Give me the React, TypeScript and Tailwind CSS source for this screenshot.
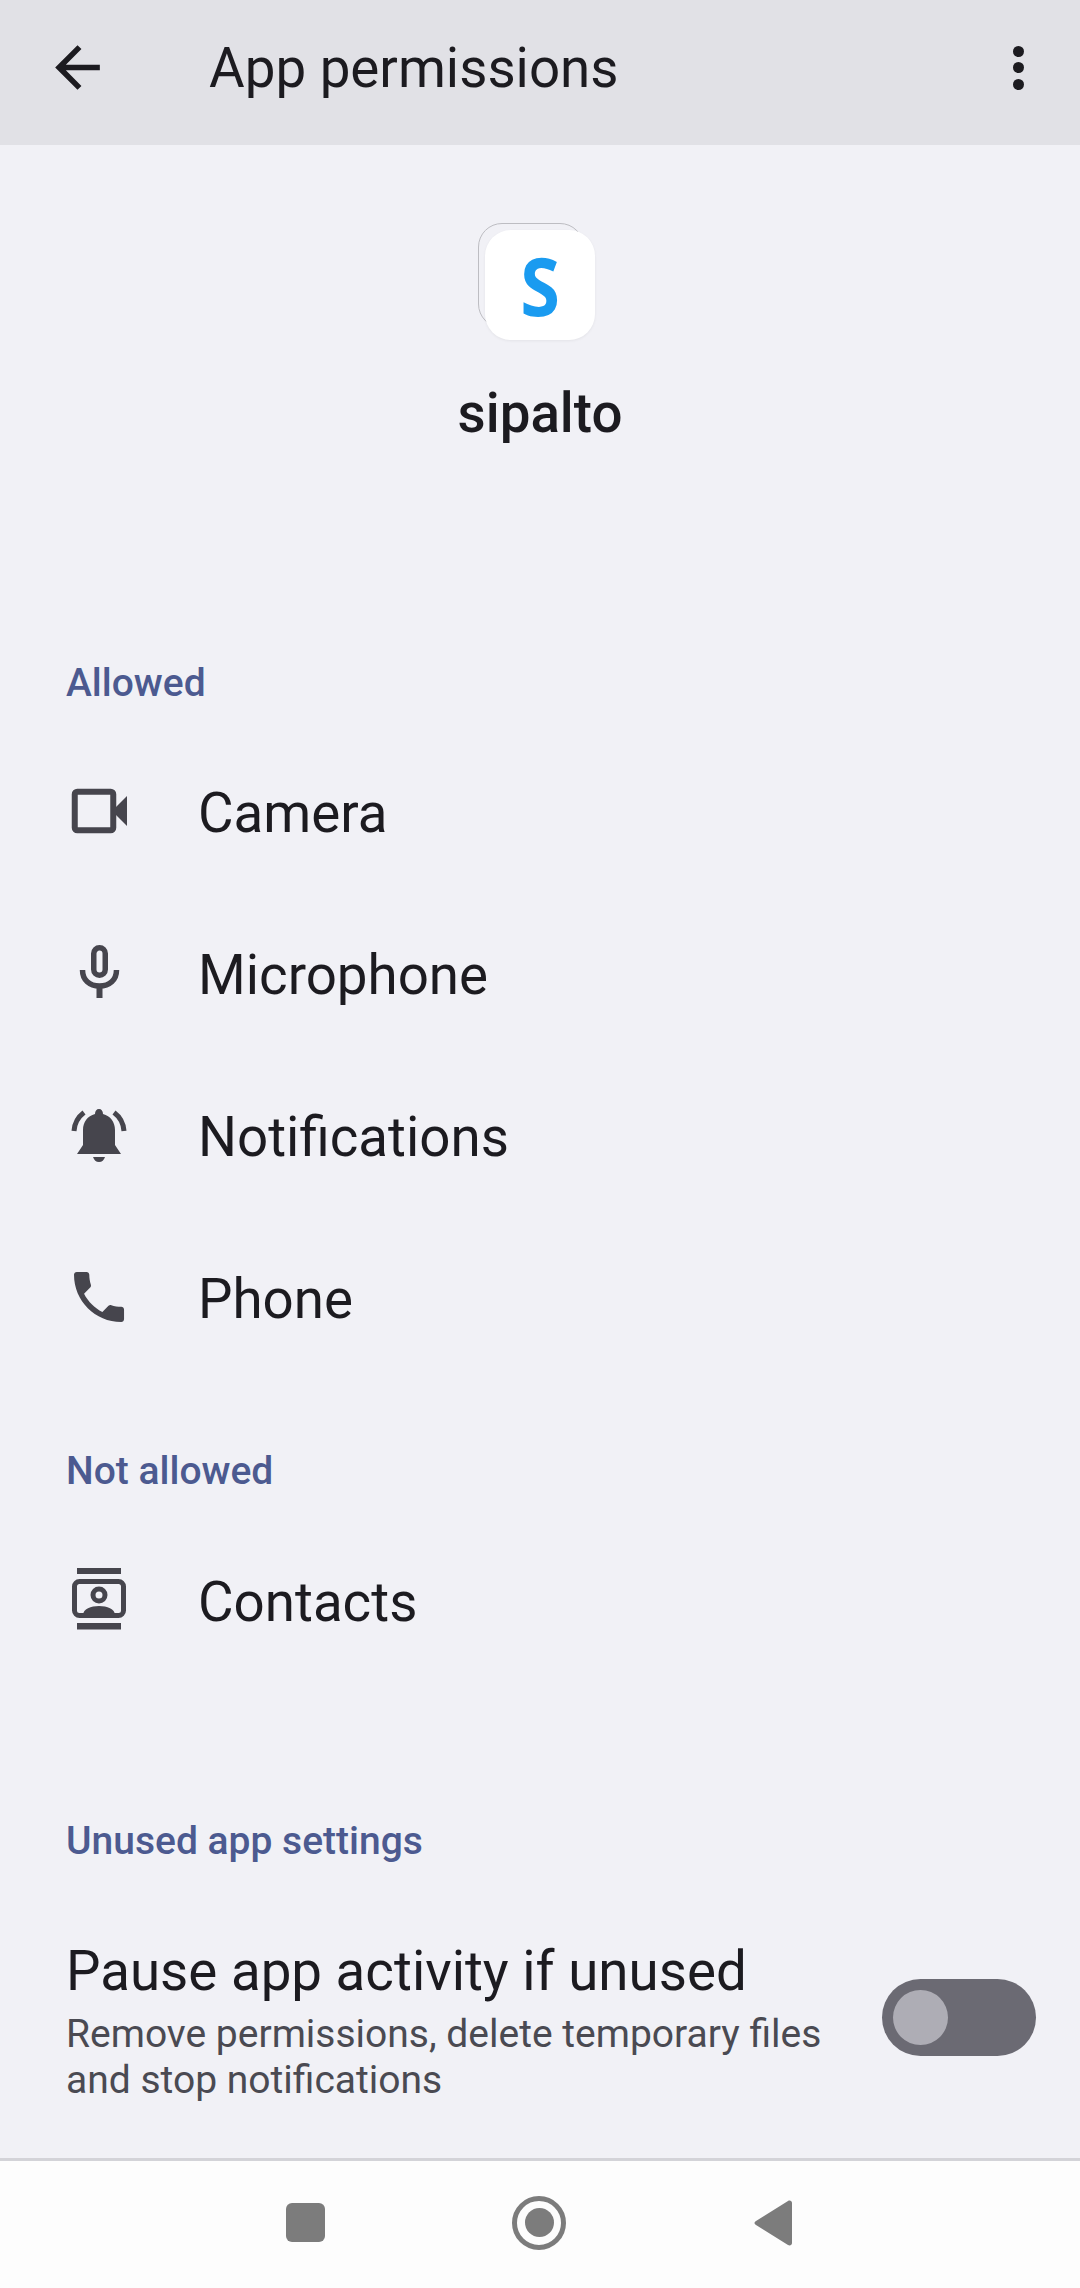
import React from "react";

const INK = "#46454d";

const CameraIcon = () => (
  <svg width="60" height="60" viewBox="0 0 60 60" fill={INK}>
    <rect x="6.75" y="8.75" width="38.5" height="38.5" rx="2.5" fill="none" stroke={INK} strokeWidth="6" />
    <path d="M44 28 L59 13 V43 Z" />
  </svg>
);

const MicIcon = () => (
  <svg width="60" height="60" viewBox="0 0 60 60" fill={INK}>
    <rect x="25.75" y="2.75" width="11.5" height="27.5" rx="5.75" fill="none" stroke={INK} strokeWidth="5.5" />
    <path d="M14.5 25 C14.5 35 21.5 41 31.5 41 C41.5 41 48.5 35 48.5 25" fill="none" stroke={INK} strokeWidth="5.5" />
    <rect x="28.5" y="40" width="6" height="13" />
  </svg>
);

const BellIcon = () => (
  <svg width="60" height="60" viewBox="0 0 60 60" fill={INK}>
    <path d="M31 2 C33.5 2 35 4 35 7 C42.5 9 47 15 47 23 V38 L53 47 H9 L15 38 V23 C15 15 19.5 9 27 7 C27 4 28.5 2 31 2 Z" />
    <path d="M25 50 H37 C36 53 34 55 31 55 C28 55 26 53 25 50 Z" />
    <path d="M6 24 C6.5 16 10 10 16 5.5 M56 24 C55.5 16 52 10 46 5.5" fill="none" stroke={INK} strokeWidth="5" />
  </svg>
);

const PhoneIcon = () => (
  <svg width="60" height="60" viewBox="0 0 60 60" fill={INK}>
    <path
      transform="translate(6 3) scale(2.78) translate(-3 -3)"
      d="M6.62 10.79c1.44 2.83 3.76 5.14 6.59 6.59l2.2-2.2c.27-.27.67-.36 1.02-.24 1.12.37 2.33.57 3.57.57.55 0 1 .45 1 1V20c0 .55-.45 1-1 1-9.39 0-17-7.61-17-17 0-.55.45-1 1-1h3.5c.55 0 1 .45 1 1 0 1.25.2 2.45.57 3.57.11.35.03.74-.25 1.02l-2.2 2.2z"
    />
  </svg>
);

// taller than the others, the bars stick out above and below the card
const ContactsIcon = () => (
  <svg width="60" height="72" viewBox="0 0 60 72" fill={INK}>
    <rect x="9" y="2" width="44" height="6" />
    <rect x="9" y="57" width="44" height="6.5" />
    <rect x="6.5" y="15.5" width="49" height="34" rx="5" fill="none" stroke={INK} strokeWidth="5" />
    <circle cx="31" cy="29" r="6" fill="none" stroke={INK} strokeWidth="5" />
    <path d="M15 49 C15 43 23 40 31 40 C39 40 47 43 47 49 Z" fill={INK} />
  </svg>
);

const SectionLabel = ({ children, className }: { children: React.ReactNode; className: string }) => (
  <div className={`pl-[66px] text-[39px] leading-[46px] font-medium text-[#4c5a90] ${className}`}>{children}</div>
);

const PermRow = ({ icon, label }: { icon: React.ReactNode; label: string }) => (
  <div className="flex h-[162px] items-center pl-[68px]">
    <div className="flex w-[130px] shrink-0 items-center">{icon}</div>
    <div className="text-[54.7px] leading-[64px] text-[#1c1b20]">{label}</div>
  </div>
);

export default function App() {
  return (
    <div className="flex h-[2288px] w-[1080px] flex-col overflow-hidden bg-[#f1f1f6] font-['Roboto',sans-serif]">
      {/* app bar */}
      <div className="flex h-[145px] shrink-0 items-center bg-[#e1e1e6] pb-[10px]">
        <svg width="67" height="67" viewBox="0 0 24 24" fill="#1c1b20" className="ml-[44px] shrink-0">
          <path d="M20 11H7.83l5.59-5.59L12 4l-8 8 8 8 1.41-1.41L7.83 13H20v-2z" />
        </svg>
        <div className="ml-[98px] text-[54.7px] leading-[64px] text-[#1c1b20]">App permissions</div>
        <div className="ml-auto mr-[56px] flex flex-col gap-[5.5px]">
          <span className="h-[11px] w-[11px] rounded-full bg-[#1c1b20]" />
          <span className="h-[11px] w-[11px] rounded-full bg-[#1c1b20]" />
          <span className="h-[11px] w-[11px] rounded-full bg-[#1c1b20]" />
        </div>
      </div>

      {/* app header */}
      <div className="flex flex-col items-center pt-[78px]">
        <div className="relative ml-[-7px] h-[117px] w-[117px]">
          <div className="absolute left-0 top-0 h-[105px] w-[106px] rounded-[24px] border border-[#bdbdc2]" />
          <div className="absolute bottom-0 right-0 flex h-[110px] w-[110px] items-center justify-center rounded-[26px] bg-white shadow-[0_1px_3px_rgba(0,0,0,0.06)]">
            <span className="scale-x-[0.9] font-['Open_Sans',sans-serif] text-[80px] leading-[76px] font-bold text-[#1a9bf0]">S</span>
          </div>
        </div>
        <div className="mt-[41px] text-[54.7px] leading-[64px] font-medium text-[#1c1b20]">sipalto</div>
      </div>

      <SectionLabel className="mt-[215px]">Allowed</SectionLabel>
      <div className="mt-[26px]">
        <PermRow icon={<CameraIcon />} label="Camera" />
        <PermRow icon={<MicIcon />} label="Microphone" />
        <PermRow icon={<BellIcon />} label="Notifications" />
        <PermRow icon={<PhoneIcon />} label="Phone" />
      </div>

      <SectionLabel className="mt-[68px]">Not allowed</SectionLabel>
      <div className="mt-[27px]">
        <PermRow icon={<ContactsIcon />} label="Contacts" />
      </div>

      <SectionLabel className="mt-[135px]">Unused app settings</SectionLabel>

      {/* pause row */}
      <div className="mt-[75px] flex items-start pl-[66px] pr-[44px]">
        <div className="flex-1">
          <div className="text-[54.7px] leading-[64px] text-[#1c1b20]">Pause app activity if unused</div>
          <div className="mt-[8px] text-[39px] leading-[46px] text-[#4a4a52]">
            Remove permissions, delete temporary files
            <br />
            and stop notifications
          </div>
        </div>
        <div className="mt-[40px] flex h-[77px] w-[154px] shrink-0 items-center rounded-full bg-[#6b6a73] pl-[11px]">
          <span className="h-[55px] w-[55px] rounded-full bg-[#aeadb5]" />
        </div>
      </div>

      {/* nav bar */}
      <div className="mt-auto flex h-[130px] shrink-0 items-center border-t-[3px] border-[#d3d3d8] bg-[#fdfdfd] pb-[4px]">
        <div className="ml-[286px] h-[39px] w-[39px] rounded-[6px] bg-[#7c7c7c]" />
        <div className="ml-[187px] flex h-[54px] w-[54px] items-center justify-center rounded-full border-[5px] border-[#7c7c7c]">
          <span className="h-[29px] w-[29px] rounded-full bg-[#7c7c7c]" />
        </div>
        <svg width="38" height="46" viewBox="0 0 38 46" fill="#7c7c7c" className="ml-[188px]">
          <path d="M34 1 C36 0 38 1 38 3 V43 C38 45 36 46 34 45 L2 25 C0 24 0 22 2 21 Z" />
        </svg>
      </div>
    </div>
  );
}
